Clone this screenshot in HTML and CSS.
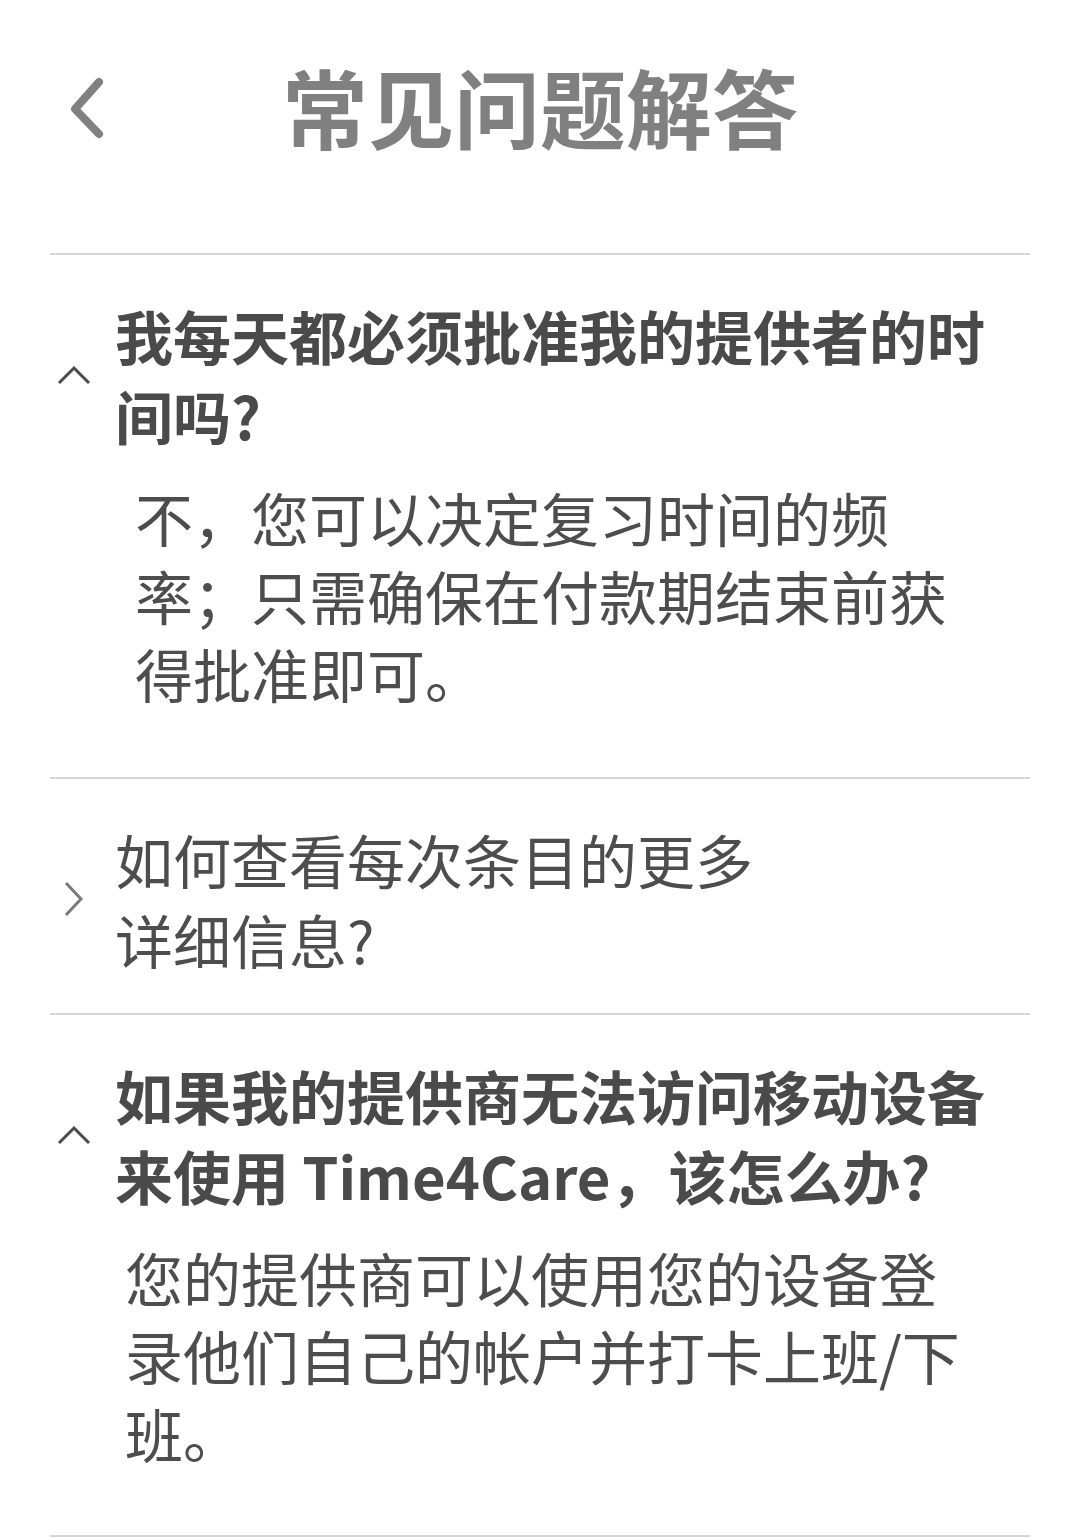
FILE: index.html
```html
<!DOCTYPE html>
<html lang="zh-CN">
<head>
<meta charset="utf-8">
<title>常见问题解答</title>
<link rel="stylesheet" href="styles.css">
</head>
<body>
<div class="page">
  <header class="header">
    <div class="back">
      <svg width="40" height="64" viewBox="0 0 40 64" aria-hidden="true">
        <path d="M33 6 L9 33 L33 58" fill="none" stroke="#808080" stroke-width="8" stroke-linecap="round" stroke-linejoin="round"/>
      </svg>
    </div>
    <h1 class="title">常见问题解答</h1>
    <div class="spacer"></div>
  </header>

  <section class="faq">
    <div class="item first">
      <div class="question open">
        <span class="caret">
          <svg width="34" height="20" viewBox="0 0 34 20" aria-hidden="true">
            <path d="M2 18 L17 3 L32 18" fill="none" stroke="#4a4a4a" stroke-width="3"/>
          </svg>
        </span>
        <p class="q-text bold">我每天都必须批准我的提供者的时间吗?</p>
      </div>
      <p class="answer a1">不，您可以决定复习时间的频<br>率；只需确保在付款期结束前获<br>得批准即可。</p>
    </div>

    <div class="item collapsed">
      <div class="question">
        <span class="caret">
          <svg width="20" height="36" viewBox="0 0 20 36" aria-hidden="true">
            <path d="M2 2 L17 18 L2 34" fill="none" stroke="#7a7a7a" stroke-width="3"/>
          </svg>
        </span>
        <p class="q-text">如何查看每次条目的更多<br>详细信息?</p>
      </div>
    </div>

    <div class="item last">
      <div class="question open">
        <span class="caret">
          <svg width="34" height="20" viewBox="0 0 34 20" aria-hidden="true">
            <path d="M2 18 L17 3 L32 18" fill="none" stroke="#4a4a4a" stroke-width="3"/>
          </svg>
        </span>
        <p class="q-text bold">如果我的提供商无法访问移动设备来使用 Time4Care，该怎么办?</p>
      </div>
      <p class="answer a3">您的提供商可以使用您的设备登<br>录他们自己的帐户并打卡上班/下<br>班。</p>
    </div>
  </section>
</div>
</body>
</html>
```

FILE: styles.css
```css
* {
  box-sizing: border-box;
}

html, body {
  margin: 0;
  padding: 0;
  background: #ffffff;
}

body {
  font-family: "Noto Sans CJK SC", "Noto Sans", sans-serif;
  color: #4a4a4a;
}

.page {
  width: 1080px;
  padding: 0 50px;
}

.header {
  height: 222px;
  display: grid;
  grid-template-columns: 1fr auto 1fr;
  align-items: center;
  margin-bottom: 31px;
}

.back {
  display: flex;
  align-items: center;
  padding-left: 16px;
  margin-bottom: 6px;
}

.back svg {
  display: block;
}

.title {
  margin: 0 0 10px;
  font-size: 86px;
  line-height: 100px;
  font-weight: 700;
  color: #808080;
  letter-spacing: 0;
}

.faq {
  border-bottom: 2px solid #d6d6d6;
}

.item {
  border-top: 2px solid #d6d6d6;
  padding: 40px 0 65px;
}

.item.collapsed {
  padding-bottom: 34px;
}

.item.last {
  padding-bottom: 63px;
}

.question {
  display: flex;
  align-items: center;
}

.caret {
  width: 48px;
  margin-right: 17px;
  display: flex;
  justify-content: center;
  align-items: center;
  flex: none;
}

.caret svg {
  display: block;
}

.q-text {
  margin: 0;
  font-size: 58px;
  line-height: 80px;
  font-weight: 400;
  color: #4d4d4d;
}

.q-text.bold {
  font-weight: 700;
  color: #4a4a4a;
}

.answer {
  margin: 23px 0 0;
  font-size: 58px;
  line-height: 78px;
  color: #4d4d4d;
}

.answer.a1 {
  padding-left: 85px;
}

.answer.a3 {
  padding-left: 75px;
}
```
